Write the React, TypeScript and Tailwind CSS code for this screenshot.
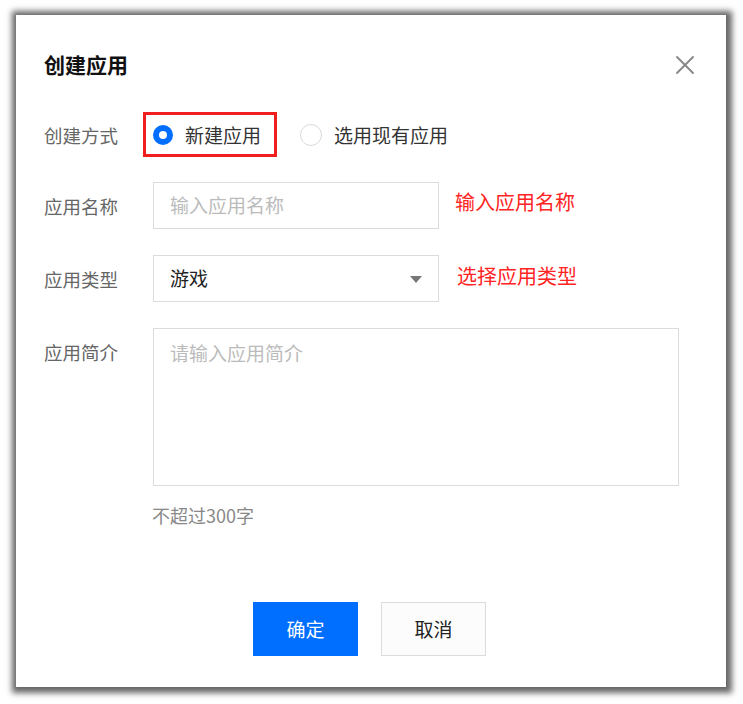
import { X } from "lucide-react";

const font = { fontFamily: '"Noto Sans CJK SC", "Noto Sans", sans-serif' };

function Radio({ checked, label }: { checked?: boolean; label: string }) {
  return (
    <div className="flex items-center gap-[12px]">
      {checked ? (
        <span className="h-[20px] w-[20px] rounded-full border-[6px] border-[#006eff] bg-white" />
      ) : (
        <span className="h-[22px] w-[22px] rounded-full border border-[#d9d9d9] bg-white" />
      )}
      <span className="text-[19px] leading-[24px] text-[#333]">{label}</span>
    </div>
  );
}

function Label({ children, className = "" }: { children: string; className?: string }) {
  return <div className={`w-[109px] shrink-0 text-[18.5px] leading-[24px] text-[#666] ${className}`}>{children}</div>;
}

export default function App() {
  return (
    <div className="min-h-[704px] w-[743px] bg-white pl-[16px] pt-[15px]" style={font}>
      <div className="h-[672px] w-[710px] bg-white pl-[28px] pt-[35px] shadow-[1px_1px_6px_5px_rgba(0,0,0,0.6)]">
        {/* Header */}
        <div className="flex h-[28px] items-center justify-between pr-[25px]">
          <h2 className="text-[21px] font-bold leading-[28px] text-[#111]">创建应用</h2>
          <X className="mt-[2px] h-[32px] w-[32px] shrink-0 text-[#888]" strokeWidth={1.4} />
        </div>

        {/* 创建方式 */}
        <div className="mt-[36px] flex h-[41px] items-center">
          <Label>创建方式</Label>
          <div className="relative">
            <Radio checked label="新建应用" />
            <div className="pointer-events-none absolute -bottom-[10px] -left-[10px] -right-[16px] -top-[11px] border-[3px] border-[#f01e1e]" />
          </div>
          <div className="ml-[39px]">
            <Radio label="选用现有应用" />
          </div>
        </div>

        {/* 应用名称 */}
        <div className="mt-[27px] flex items-center">
          <Label>应用名称</Label>
          <div className="flex h-[47px] w-[286px] items-center border border-[#dcdcdc] px-[16px] text-[19px] text-[#bbb]">
            输入应用名称
          </div>
          <span className="mb-[8px] ml-[16px] text-[20px] text-[#ff2424]">输入应用名称</span>
        </div>

        {/* 应用类型 */}
        <div className="mt-[26px] flex items-center">
          <Label>应用类型</Label>
          <div className="flex h-[47px] w-[286px] items-center justify-between border border-[#dcdcdc] pl-[16px] pr-[16px] text-[19px] text-[#222]">
            <span>游戏</span>
            <svg width="12" height="7" viewBox="0 0 12 7" className="mt-[2px]">
              <path d="M0 0 H12 L6 7 Z" fill="#777" />
            </svg>
          </div>
          <span className="mb-[6px] ml-[18px] text-[20px] text-[#ff2424]">选择应用类型</span>
        </div>

        {/* 应用简介 */}
        <div className="mt-[26px] flex items-start">
          <Label className="pt-[12px]">应用简介</Label>
          <div>
            <div className="h-[158px] w-[526px] border border-[#dcdcdc] px-[16px] pt-[12px] text-[19px] leading-[24px] text-[#bbb]">
              请输入应用简介
            </div>
            <div className="-ml-[1px] mt-[17px] text-[18px] leading-[24px] text-[#888]">不超过300字</div>
          </div>
        </div>

        {/* Footer */}
        <div className="mt-[75px] flex justify-center gap-[23px] pr-[31px]">
          <button className="h-[54px] w-[105px] bg-[#006eff] text-[19px] text-white">确定</button>
          <button className="h-[54px] w-[105px] border border-[#dcdcdc] bg-[#fcfcfc] text-[19px] text-[#222]">取消</button>
        </div>
      </div>
    </div>
  );
}
